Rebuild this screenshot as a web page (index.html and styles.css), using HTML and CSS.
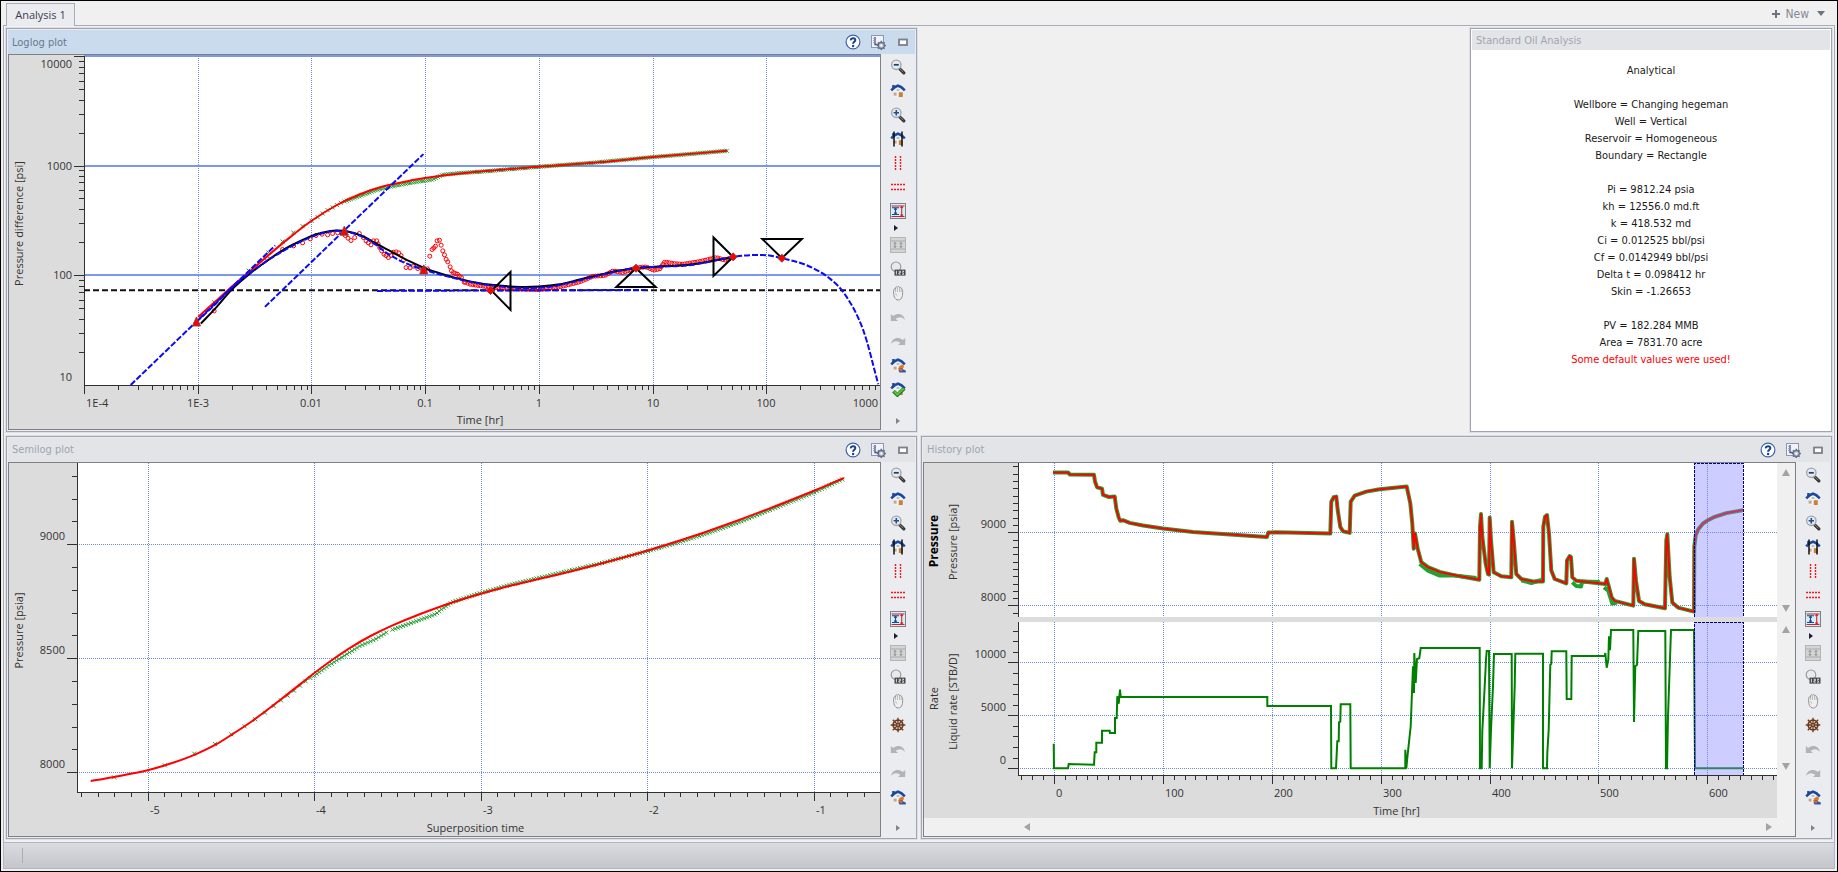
FILE: index.html
```html
<!DOCTYPE html>
<html lang="en">
<head>
   <meta charset="utf-8">
   <title>Analysis 1</title>
   <link rel="stylesheet" href="styles.css">
</head>
<body>

<!-- Icon set shared by the toolbars -->
<svg class="icon-set" aria-hidden="true">
   <symbol id="i-help" viewBox="0 0 16 16">
      <circle cx="8" cy="8" r="6.9" fill="#fff" stroke="#3f64a8" stroke-width="1.2"/>
      <path d="M5.8 6.4C5.6 3.5 10.4 3.5 10.3 6.1C10.2 7.7 8.1 7.8 8.1 9.7" fill="none" stroke="#17428f" stroke-width="2"/>
      <circle cx="8.1" cy="12" r="1.2" fill="#17428f"/>
   </symbol>
   <symbol id="i-settings" viewBox="0 0 16 16">
      <rect x="1.5" y="1.5" width="12" height="12" fill="#f1f3f9" stroke="#8a97b8"/>
      <path d="M5 3V10.5H9" fill="none" stroke="#4a5a86" stroke-width="1.4"/>
      <path d="M3 4.5H6M3 6.5H6M3 8.5H6" stroke="#8a97b8" stroke-width=".8"/>
      <path d="M11.3 6.8V16M6.7 11.5H16M8 8.2L14.6 14.8M14.6 8.2L8 14.8" stroke="#69718a" stroke-width="1.6"/>
      <circle cx="11.3" cy="11.5" r="3" fill="#c3c8d4" stroke="#69718a" stroke-width="1.3"/>
      <circle cx="11.3" cy="11.5" r="1.1" fill="#fff"/>
   </symbol>
   <symbol id="i-restore" viewBox="0 0 16 16">
      <rect x="4" y="5.5" width="8" height="5.5" fill="#fff" stroke="#7c7f8c" stroke-width="1.8"/>
   </symbol>
   <symbol id="i-lens" viewBox="0 0 16 16">
      <path d="M10 10.2L13.8 13.8" stroke="#333" stroke-width="3.2" stroke-linecap="round"/>
      <path d="M9.4 9.4L13.4 13.2" stroke="#8b8b84" stroke-width="1"/>
      <circle cx="6.3" cy="5.8" r="4.7" fill="#e3ebf1" stroke="#a3a3a3" stroke-width="1.3"/>
   </symbol>
   <symbol id="i-zoomout" viewBox="0 0 16 16">
      <use href="#i-lens"/><path d="M3.8 5.8H8.8" stroke="#1f3f74" stroke-width="1.7"/>
   </symbol>
   <symbol id="i-zoomin" viewBox="0 0 16 16">
      <use href="#i-lens"/><path d="M3.6 5.8H9M6.3 3.1V8.5" stroke="#1f4f94" stroke-width="1.6"/>
   </symbol>
   <symbol id="i-home" viewBox="0 0 16 16">
      <path d="M3 8L8 4L13.5 8V14H3Z" fill="#f3f1ee"/>
      <rect x="2.2" y="2" width="2.4" height="3.4" fill="#1b479c"/>
      <path d="M1.2 7.4L4.6 4.2L8 2.6L11.4 4.2L14.8 7.4" fill="none" stroke="#1b479c" stroke-width="2.6" stroke-linejoin="round"/>
      <path d="M6.6 7H9.4" stroke="#7fb0e8" stroke-width="1.4"/>
      <rect x="3.6" y="9.6" width="3" height="3" fill="#c2a68f"/>
      <rect x="8.8" y="9.2" width="4" height="4.8" fill="#c9803d"/>
   </symbol>
   <symbol id="i-homebars" viewBox="0 0 16 16">
      <use href="#i-home"/><path d="M4 .5V15.5M12 .5V15.5" stroke="#111" stroke-width="1.5"/>
   </symbol>
   <symbol id="i-vlines" viewBox="0 0 16 16">
      <path d="M5.5 1V16M10.5 1V16" stroke="#f01818" stroke-width="1.4" stroke-dasharray="2 1"/>
   </symbol>
   <symbol id="i-hlines" viewBox="0 0 16 16">
      <path d="M1 5.5H16M1 10.5H16" stroke="#f01818" stroke-width="1.4" stroke-dasharray="2 1"/>
   </symbol>
   <symbol id="i-ruler" viewBox="0 0 16 16">
      <rect x=".5" y=".5" width="15" height="15" fill="#d6eef7" stroke="#7b8089"/>
      <path d="M1.5 3H14.5M1.5 13.5H14.5" stroke="#d32027" stroke-width="1.1"/>
      <path d="M11.7 3V13M10.4 5L11.7 3.4L13 5M10.4 11.6L11.7 13.2L13 11.6" fill="none" stroke="#e0222a" stroke-width="1.1"/>
      <path d="M2 4.8H9M2 11.5H9M5.5 5V11.5M4.2 6.7L5.5 5.3L6.8 6.7M4.2 9.7L5.5 11.1L6.8 9.7" fill="none" stroke="#1b4b8c" stroke-width="1.1"/>
   </symbol>
   <symbol id="i-rulergrey" viewBox="0 0 16 16">
      <rect x=".5" y=".5" width="15" height="15" fill="#d4d4d4" stroke="#b4b4b4"/>
      <path d="M1 4H15M1 12H15" stroke="#aaa"/>
      <path d="M5 5.5V10.5M11 5.5V10.5M3.8 6.8L5 5.4L6.2 6.8M3.8 9.2L5 10.6L6.2 9.2M9.8 6.8L11 5.4L12.2 6.8M9.8 9.2L11 10.6L12.2 9.2" fill="none" stroke="#8f8f8f"/>
   </symbol>
   <symbol id="i-zoomrange" viewBox="0 0 16 16">
      <circle cx="6" cy="5.8" r="4.8" fill="#e9eaec" stroke="#9a9a9a" stroke-width="1.2"/>
      <rect x="4.5" y="8.6" width="11" height="6" fill="#444"/>
      <path d="M6.4 9.8V13.5M8.6 10.2H10.4V11.8H8.9V13.2H10.6M12 10.2H13.8L12.8 11.6L13.8 13.2H12" fill="none" stroke="#eee" stroke-width=".9"/>
   </symbol>
   <symbol id="i-hand" viewBox="0 0 16 16">
      <path d="M3.6 6.2C3.6 3.4 4.9 3.6 5.3 4C5.4 1.4 7 1.4 7.3 2.4C7.7 1 9.4 1.2 9.6 2.8C10.6 2 11.5 2.7 11.4 4C12.6 4 12.7 5 12.6 6.4C12.8 9.6 12.4 15 8.3 15C4.6 15 3.4 10.6 3.6 6.2Z" fill="#efefef" stroke="#929292"/>
      <path d="M5.4 4V7M7.4 3V7M9.6 3V7M11.3 4.5V7M5.5 8.2L6.8 10.5" fill="none" stroke="#aaa" stroke-width=".8"/>
   </symbol>
   <symbol id="i-wheel" viewBox="0 0 16 16">
      <path d="M8 .7V15.3M.7 8H15.3M2.8 2.8L13.2 13.2M13.2 2.8L2.8 13.2" stroke="#6b3a1c" stroke-width="1.3"/>
      <circle cx="8" cy="8" r="4.8" fill="none" stroke="#6b3a1c" stroke-width="1.8"/>
      <circle cx="8" cy="8" r="1.4" fill="#d8b38c" stroke="#6b3a1c"/>
   </symbol>
   <symbol id="i-undo" viewBox="0 0 16 16">
      <path d="M.8 5V12H8L5.6 9.8C9 7.4 12.5 7.8 15 11C14 5 8 3.2 3.2 7Z" fill="#b2b3b6"/>
   </symbol>
   <symbol id="i-redo" viewBox="0 0 16 16">
      <path d="M15.2 5V12H8L10.4 9.8C7 7.4 3.5 7.8 1 11C2 5 8 3.2 12.8 7Z" fill="#b2b3b6"/>
   </symbol>
   <symbol id="i-homeuser" viewBox="0 0 16 16">
      <use href="#i-home"/>
      <circle cx="12" cy="9.4" r="1.9" fill="#e0772a"/>
      <path d="M8.6 13.8C9 10.6 12.6 10.6 13.4 12.4L15.8 13.4V15.4H9.5Z" fill="#2b5bb0"/>
      <path d="M8.6 11L11 13.6L12.6 11.6" fill="none" stroke="#d9692a" stroke-width="1.6"/>
   </symbol>
   <symbol id="i-homecheck" viewBox="0 0 16 16">
      <use href="#i-home"/>
      <path d="M3.4 10.2L7.4 14L14.2 7.4" fill="none" stroke="#1e7a1e" stroke-width="3.6"/>
      <path d="M3.8 10.2L7.4 13.5L13.8 7.4" fill="none" stroke="#53c23f" stroke-width="2.1"/>
   </symbol>
</svg>

<div class="window">
   <nav class="tabs">
      <a class="tab" href="#analysis">Analysis 1</a>
      <button type="button" class="new-tab"><span class="plus"></span>New<span class="caret"></span></button>
   </nav>

   <main class="desk" id="analysis">
      <section class="panel active">
         <header class="panel-head">
            <h2>Loglog plot</h2>
            <button type="button" aria-label="Help"><svg><use href="#i-help"/></svg></button>
            <button type="button" aria-label="Settings"><svg><use href="#i-settings"/></svg></button>
            <button type="button" aria-label="Restore"><svg><use href="#i-restore"/></svg></button>
         </header>
         <div class="panel-body">
            <div class="plot"><svg class="chart" id="loglog"></svg></div>
            <div class="tools" data-tools="zoomout home zoomin homebars vlines hlines ruler more rulergrey zoomrange hand undo redo homeuser homecheck"></div>
         </div>
      </section>

      <section class="panel report">
         <header class="panel-head"><h2>Standard Oil Analysis</h2></header>
         <div class="results">
            <p>Analytical</p>
            <p>Wellbore = Changing hegeman<br>Well = Vertical<br>Reservoir = Homogeneous<br>Boundary = Rectangle</p>
            <p>Pi = 9812.24 psia<br>kh = 12556.0 md.ft<br>k = 418.532 md<br>Ci = 0.012525 bbl/psi<br>Cf = 0.0142949 bbl/psi<br>Delta t = 0.098412 hr<br>Skin = -1.26653</p>
            <p>PV = 182.284 MMB<br>Area = 7831.70 acre<br><span class="warning">Some default values were used!</span></p>
         </div>
      </section>

      <section class="panel">
         <header class="panel-head">
            <h2>Semilog plot</h2>
            <button type="button" aria-label="Help"><svg><use href="#i-help"/></svg></button>
            <button type="button" aria-label="Settings"><svg><use href="#i-settings"/></svg></button>
            <button type="button" aria-label="Restore"><svg><use href="#i-restore"/></svg></button>
         </header>
         <div class="panel-body">
            <div class="plot"><svg class="chart" id="semilog"></svg></div>
            <div class="tools" data-tools="zoomout home zoomin homebars vlines hlines ruler more rulergrey zoomrange hand wheel undo redo homeuser"></div>
         </div>
      </section>

      <section class="panel">
         <header class="panel-head">
            <h2>History plot</h2>
            <button type="button" aria-label="Help"><svg><use href="#i-help"/></svg></button>
            <button type="button" aria-label="Settings"><svg><use href="#i-settings"/></svg></button>
            <button type="button" aria-label="Restore"><svg><use href="#i-restore"/></svg></button>
         </header>
         <div class="panel-body">
            <div class="plot history">
               <svg class="chart" id="history"></svg>
               <div class="vscroll">
                  <div class="vtrack"><button type="button" class="up" aria-label="Up"></button><button type="button" class="down" aria-label="Down"></button></div>
                  <div class="vtrack"><button type="button" class="up" aria-label="Up"></button><button type="button" class="down" aria-label="Down"></button></div>
               </div>
               <div class="hscroll"><button type="button" class="left" aria-label="Left"></button><button type="button" class="right" aria-label="Right"></button></div>
            </div>
            <div class="tools" data-tools="zoomout home zoomin homebars vlines hlines ruler more rulergrey zoomrange hand wheel undo redo homeuser"></div>
         </div>
      </section>
   </main>

   <footer class="status"><span class="grip"></span></footer>
</div>

<script src="charts.js"></script>
</body>
</html>
```

FILE: styles.css
```css
* {
   box-sizing: border-box;
}

body {
   margin: 0;
   font-family: "DejaVu Sans Condensed", "Liberation Sans", sans-serif;
   font-size: 11px;
   color: #1a1a1a;
}

button {
   padding: 0;
   border: 0;
   background: none;
   font: inherit;
}

.icon-set {
   display: none;
}

.window {
   display: flex;
   flex-direction: column;
   height: 100vh;
   min-height: 600px;
   border: 1px solid #000;
   background: #f0f0f0;
   padding: 0 2px 2px;
}

/* Tab strip */

.tabs {
   display: flex;
   align-items: flex-end;
   justify-content: space-between;
   height: 24px;
   padding: 0 10px 0 3px;
}

.tab {
   height: 23px;
   width: 69px;
   margin-bottom: -1px;
   border: 1px solid #a9abb7;
   border-bottom: 0;
   background: #ebecf0;
   color: #3b3f4c;
   font-family: "Open Sans", sans-serif;
   line-height: 22px;
   text-align: center;
   text-decoration: none;
   z-index: 1;
}

.new-tab {
   display: flex;
   align-items: center;
   height: 23px;
   color: #858894;
   font-size: 12px;
}

.plus {
   width: 8px;
   height: 8px;
   margin-right: 5px;
   background: linear-gradient(#70737f, #70737f) center / 8px 2px no-repeat,
      linear-gradient(#70737f, #70737f) center / 2px 8px no-repeat;
}

.caret {
   margin-left: 8px;
   border: 4px solid transparent;
   border-top: 5px solid #70737f;
   border-bottom: 0;
}

/* Panels */

.desk {
   flex: 1;
   display: grid;
   grid-template-columns: 1fr 1fr;
   grid-template-rows: 1fr 1fr;
   gap: 4px;
   min-height: 0;
   padding: 2px 2px 3px;
   border: 1px solid #a9abb7;
   border-bottom: 0;
}

.panel {
   display: flex;
   flex-direction: column;
   min-width: 0;
   min-height: 0;
   padding: 1px;
   border: 1px solid #a0a5b1;
   outline: 1px solid #dcdfe8;
   background: #ebecf0;
}

.panel-head {
   display: flex;
   align-items: center;
   height: 24px;
   padding: 0 4px 0 4px;
   background: #e3e4e8;
}

.panel-head h2 {
   flex: 1;
   margin: 0;
   color: #a0a4b2;
   font-size: 11px;
   font-weight: normal;
}

.active .panel-head {
   background: #cadbed;
}

.active .panel-head h2 {
   color: #68788f;
}

.panel-head button {
   width: 16px;
   height: 16px;
   margin-left: 9px;
}

.panel-head svg,
.tools svg {
   display: block;
   width: 16px;
   height: 16px;
}

.panel-body {
   flex: 1;
   display: flex;
   min-height: 0;
}

.plot {
   flex: 1;
   min-width: 0;
   border: 1px solid #808080;
   background: #dcdcdc;
}

.tools {
   display: flex;
   flex-direction: column;
   align-items: center;
   width: 34px;
   padding: 1px 0 2px;
}

.tools button {
   display: grid;
   place-items: center;
   width: 24px;
   height: 24px;
}

.tools .more {
   height: 10px;
   padding-right: 4px;
}

.tools .more::before,
.tools .overflow::before {
   content: "";
   border: 3px solid transparent;
   border-left: 4px solid #1c1c2c;
   border-right: 0;
}

.tools .overflow {
   height: 14px;
   margin-top: auto;
}

.tools .overflow::before {
   border-left-color: #80838f;
}

/* Report */

.report {
   justify-self: end;
   width: 362px;
   background: #fff;
}

.report .panel-head {
   height: 20px;
}

.results {
   padding-top: 12px;
   line-height: 17px;
   text-align: center;
}

.results p {
   margin: 0 0 17px;
}

.warning {
   color: #f00;
}

/* History plot scroll bars */

.history {
   display: grid;
   grid-template-columns: 1fr 18px;
   grid-template-rows: 1fr 18px;
   background: #f0f0f0;
}

.history .chart {
   background: #dcdcdc;
}

.vscroll {
   display: flex;
   flex-direction: column;
   gap: 4px;
   padding-bottom: 44px;
}

.vtrack {
   flex: 1;
   display: flex;
   flex-direction: column;
   align-items: center;
   justify-content: space-between;
   padding: 6px 0 4px;
}

.hscroll {
   display: flex;
   align-items: center;
   justify-content: space-between;
   padding: 0 5px 0 100px;
}

.up,
.down,
.left,
.right {
   border: 4px solid transparent;
}

.up {
   border-bottom: 7px solid #a3a3a3;
   border-top: 0;
}

.down {
   border-top: 7px solid #a3a3a3;
   border-bottom: 0;
}

.left {
   border-right: 6px solid #a3a3a3;
   border-left: 0;
}

.right {
   border-left: 6px solid #a3a3a3;
   border-right: 0;
}

.status {
   height: 27px;
   padding: 5px 18px;
   border: 1px solid #b4b6c0;
   background: linear-gradient(#dadbe0, #c5c6cb);
}

.grip {
   display: block;
   width: 1px;
   height: 15px;
   background: #a9abb5;
}

/* Charts */

.chart {
   display: block;
   width: 100%;
   height: 100%;
   min-width: 0;
   min-height: 0;
   overflow: hidden;
}

.chart text {
   font-family: "Open Sans", "Noto Sans", sans-serif;
   font-size: 11px;
   fill: #333;
}

.chart text.strong {
   font-size: 12px;
   font-weight: bold;
   fill: #000;
}

.chart path {
   fill: none;
}

.area {
   fill: #fff;
}

.axis {
   stroke: #303030;
   shape-rendering: crispEdges;
}

.grid {
   stroke: #6a8bea;
   stroke-dasharray: 1 1;
   shape-rendering: crispEdges;
}

.grid-solid {
   stroke: #7c98e8;
   stroke-width: 2;
   shape-rendering: crispEdges;
}

.model {
   stroke: #f00;
   stroke-width: 2;
   stroke-linejoin: round;
}

.crosses {
   stroke: #22a033;
}

.gauge {
   stroke: #22a033;
   stroke-width: 4;
   stroke-linejoin: round;
}

.rings {
   stroke: #f00;
}

.derivative {
   stroke: #000;
   stroke-width: 2;
}

.reference {
   stroke: #111;
   stroke-width: 2;
   stroke-dasharray: 6 3;
}

.guide {
   stroke: #0a0af5;
   stroke-width: 2;
   stroke-dasharray: 6 2;
}

.chart path.handle {
   stroke: #000;
   stroke-width: 2;
}

.chart path.node {
   fill: #f00;
   stroke: #8c4038;
}

.rate {
   stroke: #008000;
   stroke-width: 2;
}

.selection {
   fill: #8282ff;
   fill-opacity: .4;
}

.selection-edge {
   stroke: #00008b;
   stroke-dasharray: 3 1;
   shape-rendering: crispEdges;
}
```

FILE: charts.js
```js
var NS = 'http://www.w3.org/2000/svg';

// Adds an element to the chart
function add(svg, name, attrs, text) {
   var el = document.createElementNS(NS, name);
   for (var key in attrs) {
      el.setAttribute(key, attrs[key]);
   }
   if (text) {
      el.textContent = text;
   }
   svg.appendChild(el);
   return el;
}

function path(svg, cls, d) {
   return add(svg, 'path', {'class': cls, d: d});
}

// "x,y x,y ..." to a list of pairs
function parse(list) {
   return list.trim().split(/\s+/).map(function (p) {
      return p.split(',').map(Number);
   });
}

// Maps the units of a trace grid [x0, y0, x1, y1] onto a box of the chart
function scaler(grid, box) {
   return function (p) {
      return [
         box.x + (p[0] - grid[0]) / (grid[2] - grid[0]) * box.w,
         box.y + (p[1] - grid[1]) / (grid[3] - grid[1]) * box.h
      ];
   };
}

function polyline(pts) {
   return 'M' + pts.map(function (p) { return p[0].toFixed(1) + ' ' + p[1].toFixed(1); }).join('L');
}

// Smooth curve through the points, which run from left to right
function smooth(pts) {
   var slope = pts.map(function (p, i) {
      var a = pts[i - 1] || p, b = pts[i + 1] || p;
      return (b[1] - a[1]) / (b[0] - a[0]);
   });
   var d = 'M' + pts[0].join(' ');
   for (var i = 0; i < pts.length - 1; i++) {
      var b = pts[i], c = pts[i + 1], t = (c[0] - b[0]) / 3;
      d += 'C' + [b[0] + t, b[1] + t * slope[i], c[0] - t, c[1] - t * slope[i + 1], c[0], c[1]].map(function (n) {
         return n.toFixed(1);
      }).join(' ');
   }
   return d;
}

// Points at an even step along a line
function along(pts, step) {
   var out = [], rest = 0;
   for (var i = 0; i < pts.length - 1; i++) {
      var dx = pts[i + 1][0] - pts[i][0], dy = pts[i + 1][1] - pts[i][1];
      var len = Math.sqrt(dx * dx + dy * dy);
      for (var t = rest; t < len; t += step) {
         out.push([pts[i][0] + dx * t / len, pts[i][1] + dy * t / len]);
      }
      rest = t - len;
   }
   return out;
}

function crosses(pts) {
   return pts.map(function (p) {
      var x = p[0], y = p[1];
      return 'M' + (x - 2) + ' ' + (y - 2) + 'l4 4m0 -4l-4 4';
   }).join('');
}

function rings(pts) {
   return pts.map(function (p) {
      return 'M' + (p[0] - 2) + ' ' + p[1] + 'a2 2 0 1 0 4 0a2 2 0 1 0 -4 0';
   }).join('');
}

function diamond(p) {
   return 'M' + p[0] + ' ' + (p[1] - 4) + 'l4 4l-4 4l-4 -4z';
}

function triangle(p) {
   return 'M' + p[0] + ' ' + (p[1] - 5) + 'l4 9h-8z';
}

function label(svg, x, y, text, anchor) {
   add(svg, 'text', {x: x, y: y + 4, 'text-anchor': anchor}, text);
}

function upright(svg, x, y, text, cls) {
   add(svg, 'text', {transform: 'translate(' + (x + 4) + ' ' + y + ') rotate(-90)', 'text-anchor': 'middle', 'class': cls || ''}, text);
}

// Linear axes. r is the data range [xmin, xmax, ymin, ymax]
function linearX(svg, box, r, major, minor) {
   var d = 'M' + box.x + ' ' + (box.y + box.h) + 'h' + box.w;
   for (var i = Math.ceil(r[0] / minor); i * minor <= r[1]; i++) {
      var x = Math.round(box.x + (i * minor - r[0]) / (r[1] - r[0]) * box.w);
      var big = i % Math.round(major / minor) == 0;
      d += 'M' + x + ' ' + (box.y + box.h) + 'v' + (big ? 9 : 5);
      if (big) {
         label(svg, x + 2, box.y + box.h + 18, String(Math.round(i * minor)), 'start');
      }
   }
   path(svg, 'axis', d);
}

function linearY(svg, box, r, major, minor, gap) {
   var d = 'M' + box.x + ' ' + box.y + 'v' + box.h;
   for (var i = Math.ceil(r[2] / minor); i * minor <= r[3]; i++) {
      var y = Math.round(box.y + box.h - (i * minor - r[2]) / (r[3] - r[2]) * box.h);
      var big = i % Math.round(major / minor) == 0;
      d += 'M' + box.x + ' ' + y + 'h' + (big ? -10 : -5);
      if (big) {
         label(svg, box.x - gap, y - 8, String(i * minor), 'end');
      }
   }
   path(svg, 'axis', d);
}

function gridLines(svg, box, r, stepX, stepY) {
   var d = '';
   for (var v = Math.ceil(r[0] / stepX) * stepX; v <= r[1]; v += stepX) {
      d += 'M' + Math.round(box.x + (v - r[0]) / (r[1] - r[0]) * box.w) + ' ' + box.y + 'v' + box.h;
   }
   for (v = Math.ceil(r[2] / stepY) * stepY; v <= r[3]; v += stepY) {
      d += 'M' + box.x + ' ' + Math.round(box.y + box.h - (v - r[2]) / (r[3] - r[2]) * box.h) + 'h' + box.w;
   }
   path(svg, 'grid', d);
}

function area(svg, box) {
   add(svg, 'rect', {'class': 'area', x: box.x, y: box.y, width: box.w, height: box.h});
}

function drawLoglog() {
   var svg = document.querySelector('#loglog');
   var w = svg.clientWidth, h = svg.clientHeight;
   svg.innerHTML = '';
   var box = {x: 75, y: 1, w: w - 75, h: h - 45};
   var to = scaler([255, 168, 2640, 1154], box);
   function pts(list) { return parse(list).map(to); }
   area(svg, box);

   var names = ['1E-4', '1E-3', '0.01', '0.1', '1', '10', '100', '1000'];
   var bottom = box.y + box.h, ticks = 'M' + box.x + ' ' + box.y + 'V' + bottom + 'H' + w;
   var dots = '', lines = '';
   for (var i = 0; i < 8; i++) {
      var x = Math.round(box.x + i * box.w / 7);
      dots += 'M' + x + ' ' + box.y + 'V' + bottom;
      ticks += 'M' + x + ' ' + bottom + 'v9';
      for (var m = 2; m < 10 && i < 7; m++) {
         ticks += 'M' + Math.round(x + Math.log10(m) * box.w / 7) + ' ' + bottom + 'v5';
      }
      if (i == 0) {
         label(svg, x + 2, bottom + 18, names[i], 'start');
      } else if (i == 7) {
         label(svg, x - 2, bottom + 18, names[i], 'end');
      } else {
         label(svg, x, bottom + 18, names[i], 'middle');
      }
   }
   for (i = 0; i < 4; i++) {
      var y = Math.round(bottom - i * box.h / 3);
      if (i > 0) {
         lines += 'M' + box.x + ' ' + y + 'H' + w;
         ticks += 'M' + box.x + ' ' + y + 'h-10';
      }
      for (m = 2; m < 10 && i < 3; m++) {
         ticks += 'M' + box.x + ' ' + Math.round(y - Math.log10(m) * box.h / 3) + 'h-5';
      }
      label(svg, 63, i == 0 ? y - 8 : i == 3 ? y + 8 : y, String(Math.pow(10, i + 1)), 'end');
   }
   path(svg, 'grid-solid', lines);
   path(svg, 'grid', dots);
   path(svg, 'axis', ticks);
   label(svg, (box.x + w) / 2 - 2, bottom + 35, 'Time [hr]', 'middle');
   upright(svg, 10, box.y + box.h / 2 + 3, 'Pressure difference [psi]');

   path(svg, 'reference', polyline(pts('255,870 2640,870')));

   // Pressure
   path(svg, 'crosses', crosses(pts('645,906 748,811 808,757 850,724 882,697 910,678 937,662 955,651 970,640 985,630 1000,622 1013,615 1025,608')
      .concat(along(pts('1036,604 1080,588 1130,570 1180,558 1240,547 1300,538 1330,524 1380,519 1440,515 1617,500 1780,488 1959,471 2080,461 2182,452'), 2.2))));
   path(svg, 'model', smooth(pts('597,950 645,907 700,857 750,815 810,763 870,713 937,662 1010,616 1080,583 1150,559 1240,540 1330,526 1440,514 1617,500 1780,488 1959,471 2182,452')));

   // Derivative
   path(svg, 'rings', rings(pts('645,932 805,776 850,748 883,737 910,728 933,716 950,706 968,702 985,704 1000,700 1015,698 1030,698 1038,706 1046,714 1055,721 1066,712 1080,700 1092,712 1100,722 1107,728 1115,734 1122,722 1132,722 1136,731 1141,742 1147,752 1154,762 1160,766 1167,772 1175,766 1182,756 1190,755 1198,758 1205,766 1212,780 1220,802 1232,803 1243,798 1255,805 1268,806 1284,806 1291,768 1298,748 1303,743 1308,738 1313,722 1320,720 1325,735 1330,752 1335,764 1340,777 1345,785 1352,800 1356,812 1362,817 1368,820 1374,822 1380,828 1386,832 1394,846')
      .concat(along(pts('1398,846 1412,852 1432,855 1480,862 1560,866 1617,868 1680,860 1740,845 1780,828 1815,826 1840,812 1870,817 1909,803 1940,800 1962,810 1980,806 1995,785 2020,790 2050,792 2100,784 2150,772 2175,780 2200,770'), 2.6))));
   path(svg, 'derivative', smooth(pts('605,970 645,928 700,866 750,822 810,777 870,739 937,707 975,696 1010,691 1045,694 1085,706 1130,730 1180,757 1230,783 1274,803 1330,822 1380,836 1440,849 1500,856 1560,860 1617,859 1680,852 1740,838 1800,824 1860,811 1909,804 1959,800 2060,794 2120,786 2200,770')));
   path(svg, 'guide', smooth(pts('592,965 645,915 700,861 750,820 810,778 870,742 937,710 975,698 1010,692 1045,695 1085,708 1120,727 1160,757 1210,785 1272,808 1330,825 1400,842 1473,855 1560,863 1640,861 1700,850 1780,830 1840,815 1909,803 1959,800 2060,796 2120,786 2200,770 2250,765 2300,765 2346,774 2420,795 2490,835 2540,890 2590,990 2635,1152')));
   path(svg, 'guide', polyline(pts('395,1154 828,736')));
   path(svg, 'guide', polyline(pts('797,920 1272,462')));
   path(svg, 'guide', polyline(pts('1133,872 1940,869')));

   path(svg, 'handle', polyline(pts('1476,871 1533,815 1533,929')) + 'z');
   path(svg, 'handle', polyline(pts('1909,804 1850,860 1968,860')) + 'z');
   path(svg, 'handle', polyline(pts('2200,770 2141,712 2141,827')) + 'z');
   path(svg, 'handle', polyline(pts('2346,774 2287,716 2406,716')) + 'z');
   path(svg, 'node', pts('1473,871 1909,804 2200,770 2346,774').map(diamond).join(''));
   path(svg, 'node', pts('592,965 1035,693 1273,809').map(triangle).join(''));
}

function drawSemilog() {
   var svg = document.querySelector('#semilog');
   var w = svg.clientWidth, h = svg.clientHeight;
   svg.innerHTML = '';
   var box = {x: 68, y: 0, w: w - 68, h: h - 45};
   var range = [-5.425, -0.601, 7913, 9356];
   var to = scaler([235, 100, 2640, 1087], box);
   function pts(list) { return parse(list).map(to); }
   area(svg, box);
   gridLines(svg, box, range, 1, 500);
   linearX(svg, box, range, 1, 0.1);
   linearY(svg, box, range, 500, 100, 12);
   label(svg, (box.x + w) / 2 - 3, box.y + box.h + 36, 'Superposition time', 'middle');
   upright(svg, 10, box.y + box.h / 2 + 3, 'Pressure [psia]');

   path(svg, 'crosses', crosses(pts('346,1043 498,1007 586,972 648,943 697,914 737,890 769,869 798,849 824,829 846,812 866,798 885,783 903,768 920,755 934,745')
      .concat(along(pts('946,738 985,710 1020,688 1080,650 1130,628 1167,605'), 3))
      .concat(along(pts('1180,600 1250,575 1310,553 1325,540 1360,517 1440,491 1530,466 1710,423 1800,402 1942,365 2020,343 2120,312 2220,277 2441,189 2534,146'), 2.8))));
   path(svg, 'model', smooth(pts('276,1054 346,1042 446,1022 520,1000 590,974 650,945 700,914 760,874 850,806 946,730 1000,690 1060,650 1120,616 1180,587 1250,558 1320,532 1380,512 1445,492 1530,469 1630,445 1710,426 1800,403 1942,363 2020,339 2120,306 2220,270 2320,232 2441,184 2532,145')));
}

function drawHistory() {
   var svg = document.querySelector('#history');
   var w = svg.clientWidth, h = svg.clientHeight;
   svg.innerHTML = '';
   var half = Math.round((h - 48) / 2);
   var top = {x: 94, y: 0, w: w - 94, h: half};
   var low = {x: 94, y: half + 5, w: w - 94, h: h - 44 - half - 5};
   var topRange = [-33, 664, 7843, 9945];
   var lowRange = [-33, 664, -640, 13823];
   var toTop = scaler([325, 100, 2602, 558], top);
   var toLow = scaler([325, 577, 2602, 1036], low);
   area(svg, top);
   area(svg, low);
   gridLines(svg, top, topRange, 100, 1000);
   gridLines(svg, low, lowRange, 100, 5000);
   linearY(svg, top, topRange, 1000, 100, 12);
   linearY(svg, low, lowRange, 5000, 1000, 12);
   linearX(svg, low, lowRange, 100, 10);
   label(svg, (top.x + w) / 2 - 1, low.y + low.h + 36, 'Time [hr]', 'middle');
   upright(svg, 10, top.h / 2 + 1, 'Pressure', 'strong');
   upright(svg, 29, top.h / 2 + 2, 'Pressure [psia]');
   upright(svg, 10, low.y + low.h / 2, 'Rate');
   upright(svg, 29, low.y + low.h / 2 + 3, 'Liquid rate [STB/D]');

   var pressure = parse('430,128 475,128 480,134 553,135 556,155 562,172 577,176 580,195 598,201 615,200 620,235 627,262 632,272 640,270 660,278 700,286 760,295 850,305 950,312 1072,320 1076,307 1100,306 1262,310 1265,215 1272,202 1280,200 1284,240 1292,290 1300,303 1320,308 1323,215 1335,197 1370,185 1410,178 1491,170 1502,220 1508,280 1512,355 1516,310 1524,355 1535,395 1555,410 1590,424 1640,435 1709,447 1711,290 1714,252 1718,320 1728,400 1735,430 1738,432 1740,262 1744,330 1752,425 1775,437 1805,440 1807,275 1812,330 1820,430 1835,445 1870,452 1900,452 1901,290 1906,260 1912,255 1918,310 1925,420 1935,445 1970,458 1972,390 1980,377 1984,380 1988,440 2000,450 2087,460 2091,445 2098,470 2106,500 2115,510 2171,524 2173,385 2179,450 2188,510 2205,520 2266,532 2270,330 2273,312 2280,440 2288,515 2305,530 2353,542 2354,350 2358,315 2366,297 2380,280 2395,270 2415,260 2450,249 2501,240').map(toTop);
   path(svg, 'gauge', polyline(pressure));
   path(svg, 'gauge', polyline(parse('1530,400 1555,420 1590,435 1627,434 1700,442').map(toTop)));
   path(svg, 'gauge', polyline(parse('1835,449 1865,457 1895,448').map(toTop)));
   path(svg, 'gauge', polyline(parse('1988,455 2000,466 2014,467 2018,452 2070,454').map(toTop)));
   path(svg, 'gauge', polyline(parse('2083,470 2096,480 2108,518 2122,515').map(toTop)));
   path(svg, 'model', polyline(pressure));

   path(svg, 'rate', polyline(parse('432,942 433,1016 475,1016 477,1003 553,1005 555,968 560,968 560,939 577,939 577,903 600,903 601,910 616,910 616,865 621,865 623,800 627,822 631,780 633,802 1073,802 1073,829 1264,829 1265,1016 1279,1016 1283,935 1287,935 1288,878 1292,876 1293,824 1322,824 1323,1016 1487,1016 1487,960 1490,1016 1493,985 1503,890 1510,710 1513,790 1514,670 1518,760 1522,688 1529,686 1533,655 1710,655 1711,1016 1716,1016 1718,905 1725,770 1729,690 1731,664 1738,664 1740,1016 1744,900 1750,770 1753,673 1806,673 1807,1016 1812,860 1815,770 1817,672 1900,672 1900,1016 1912,1016 1913,970 1917,900 1922,705 1925,702 1926,665 1970,665 1971,808 1985,808 1986,679 2085,679 2087,670 2091,714 2096,690 2098,620 2101,662 2104,601 2171,601 2173,877 2177,710 2182,705 2186,604 2267,604 2269,1016 2272,1016 2275,860 2284,601 2353,601 2356,1016 2501,1016').map(toLow)));

   // Selected build-up
   [[top, toTop, 100], [low, toLow, 577]].forEach(function (part) {
      var x0 = Math.round(part[1]([2352, part[2]])[0]), x1 = Math.round(part[1]([2501, part[2]])[0]);
      add(svg, 'rect', {'class': 'selection', x: x0, y: part[0].y, width: x1 - x0, height: part[0].h});
      path(svg, 'selection-edge', 'M' + (x0 + 0.5) + ' ' + (part[0].y + part[0].h) + 'V' + (part[0].y + 0.5) + 'H' + (x1 + 0.5) + 'V' + (part[0].y + part[0].h));
   });
}

// Toolbar buttons
document.querySelectorAll('.tools').forEach(function (bar) {
   (bar.dataset.tools + ' overflow').split(' ').forEach(function (name) {
      var button = document.createElement('button');
      button.type = 'button';
      button.className = name;
      button.setAttribute('aria-label', name);
      if (name != 'more' && name != 'overflow') {
         button.innerHTML = '<svg><use href="#i-' + name + '"/></svg>';
      }
      bar.appendChild(button);
   });
});

function drawAll() {
   drawLoglog();
   drawSemilog();
   drawHistory();
}

drawAll();
window.addEventListener('resize', drawAll);
```
